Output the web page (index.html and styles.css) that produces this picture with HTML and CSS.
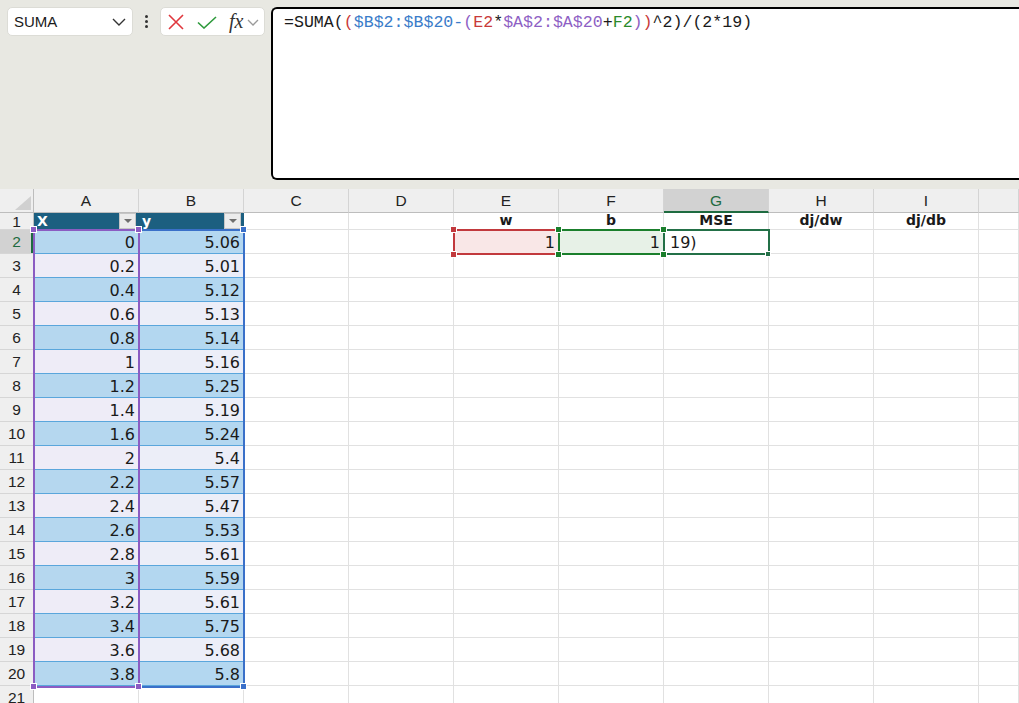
FILE: index.html
```html
<!DOCTYPE html>
<html>
<head>
<meta charset="utf-8">
<link rel="stylesheet" href="styles.css">
</head>
<body>
<div class="app">
  <div class="toolbar">
    <div class="namebox">
      <span class="nb-text">SUMA</span>
      <svg class="chev" width="14" height="8" viewBox="0 0 14 8"><path d="M1 1 L7 7 L13 1" fill="none" stroke="#333" stroke-width="1.4"/></svg>
    </div>
    <div class="dots"><i></i><i></i><i></i></div>
    <div class="fnbox">
      <svg class="ic-x" width="16" height="16" viewBox="0 0 16 16"><path d="M1 1 L15 15 M15 1 L1 15" stroke="#e0383e" stroke-width="1.6" fill="none"/></svg>
      <svg class="ic-ok" width="20" height="13" viewBox="0 0 20 13"><path d="M1 6.5 L7 12 L19 1" stroke="#2e9a3c" stroke-width="1.6" fill="none"/></svg>
      <span class="fx">fx</span>
      <svg class="chev2" width="12" height="7" viewBox="0 0 12 7"><path d="M1 1 L6 6 L11 1" fill="none" stroke="#9a9a9a" stroke-width="1.3"/></svg>
    </div>
    <div class="formula">=SUMA(<span class="fr">(</span><span class="fb">$B$2:$B$20-</span><span class="fp">(</span><span class="fr">E2</span>*<span class="fp">$A$2:$A$20</span>+<span class="fg">F2</span><span class="fp">)</span><span class="fr">)</span>^2)/(2*19)</div>
  </div>

  <div class="sheet">
    <div class="row hdr">
      <div class="rh corner"><span class="tri"></span></div>
      <div class="c ch">A</div><div class="c ch">B</div><div class="c ch">C</div><div class="c ch">D</div><div class="c ch">E</div><div class="c ch">F</div><div class="c ch sel">G</div><div class="c ch">H</div><div class="c ch">I</div><div class="c ch last"></div>
    </div>
    <div class="row r1">
      <div class="rh">1</div>
      <div class="c th"><span>X</span><span class="filt"><i></i></span></div>
      <div class="c th"><span>y</span><span class="filt"><i></i></span></div>
      <div class="c"></div><div class="c"></div>
      <div class="c bh">w</div><div class="c bh">b</div><div class="c bh">MSE</div><div class="c bh">dj/dw</div><div class="c bh">dj/db</div><div class="c last"></div>
    </div>
    <div class="row">
      <div class="rh act">2</div>
      <div class="c ev a">0</div><div class="c ev b">5.06</div><div class="c"></div><div class="c"></div>
      <div class="c num efill">1</div><div class="c num ffill">1</div><div class="c gtxt">19)</div><div class="c"></div><div class="c"></div><div class="c last"></div>
    </div>
    <div class="row"><div class="rh">3</div><div class="c od a">0.2</div><div class="c od b">5.01</div><div class="c"></div><div class="c"></div><div class="c"></div><div class="c"></div><div class="c"></div><div class="c"></div><div class="c"></div><div class="c last"></div></div>
    <div class="row"><div class="rh">4</div><div class="c ev a">0.4</div><div class="c ev b">5.12</div><div class="c"></div><div class="c"></div><div class="c"></div><div class="c"></div><div class="c"></div><div class="c"></div><div class="c"></div><div class="c last"></div></div>
    <div class="row"><div class="rh">5</div><div class="c od a">0.6</div><div class="c od b">5.13</div><div class="c"></div><div class="c"></div><div class="c"></div><div class="c"></div><div class="c"></div><div class="c"></div><div class="c"></div><div class="c last"></div></div>
    <div class="row"><div class="rh">6</div><div class="c ev a">0.8</div><div class="c ev b">5.14</div><div class="c"></div><div class="c"></div><div class="c"></div><div class="c"></div><div class="c"></div><div class="c"></div><div class="c"></div><div class="c last"></div></div>
    <div class="row"><div class="rh">7</div><div class="c od a">1</div><div class="c od b">5.16</div><div class="c"></div><div class="c"></div><div class="c"></div><div class="c"></div><div class="c"></div><div class="c"></div><div class="c"></div><div class="c last"></div></div>
    <div class="row"><div class="rh">8</div><div class="c ev a">1.2</div><div class="c ev b">5.25</div><div class="c"></div><div class="c"></div><div class="c"></div><div class="c"></div><div class="c"></div><div class="c"></div><div class="c"></div><div class="c last"></div></div>
    <div class="row"><div class="rh">9</div><div class="c od a">1.4</div><div class="c od b">5.19</div><div class="c"></div><div class="c"></div><div class="c"></div><div class="c"></div><div class="c"></div><div class="c"></div><div class="c"></div><div class="c last"></div></div>
    <div class="row"><div class="rh">10</div><div class="c ev a">1.6</div><div class="c ev b">5.24</div><div class="c"></div><div class="c"></div><div class="c"></div><div class="c"></div><div class="c"></div><div class="c"></div><div class="c"></div><div class="c last"></div></div>
    <div class="row"><div class="rh">11</div><div class="c od a">2</div><div class="c od b">5.4</div><div class="c"></div><div class="c"></div><div class="c"></div><div class="c"></div><div class="c"></div><div class="c"></div><div class="c"></div><div class="c last"></div></div>
    <div class="row"><div class="rh">12</div><div class="c ev a">2.2</div><div class="c ev b">5.57</div><div class="c"></div><div class="c"></div><div class="c"></div><div class="c"></div><div class="c"></div><div class="c"></div><div class="c"></div><div class="c last"></div></div>
    <div class="row"><div class="rh">13</div><div class="c od a">2.4</div><div class="c od b">5.47</div><div class="c"></div><div class="c"></div><div class="c"></div><div class="c"></div><div class="c"></div><div class="c"></div><div class="c"></div><div class="c last"></div></div>
    <div class="row"><div class="rh">14</div><div class="c ev a">2.6</div><div class="c ev b">5.53</div><div class="c"></div><div class="c"></div><div class="c"></div><div class="c"></div><div class="c"></div><div class="c"></div><div class="c"></div><div class="c last"></div></div>
    <div class="row"><div class="rh">15</div><div class="c od a">2.8</div><div class="c od b">5.61</div><div class="c"></div><div class="c"></div><div class="c"></div><div class="c"></div><div class="c"></div><div class="c"></div><div class="c"></div><div class="c last"></div></div>
    <div class="row"><div class="rh">16</div><div class="c ev a">3</div><div class="c ev b">5.59</div><div class="c"></div><div class="c"></div><div class="c"></div><div class="c"></div><div class="c"></div><div class="c"></div><div class="c"></div><div class="c last"></div></div>
    <div class="row"><div class="rh">17</div><div class="c od a">3.2</div><div class="c od b">5.61</div><div class="c"></div><div class="c"></div><div class="c"></div><div class="c"></div><div class="c"></div><div class="c"></div><div class="c"></div><div class="c last"></div></div>
    <div class="row"><div class="rh">18</div><div class="c ev a">3.4</div><div class="c ev b">5.75</div><div class="c"></div><div class="c"></div><div class="c"></div><div class="c"></div><div class="c"></div><div class="c"></div><div class="c"></div><div class="c last"></div></div>
    <div class="row"><div class="rh">19</div><div class="c od a">3.6</div><div class="c od b">5.68</div><div class="c"></div><div class="c"></div><div class="c"></div><div class="c"></div><div class="c"></div><div class="c"></div><div class="c"></div><div class="c last"></div></div>
    <div class="row"><div class="rh">20</div><div class="c ev a">3.8</div><div class="c ev b">5.8</div><div class="c"></div><div class="c"></div><div class="c"></div><div class="c"></div><div class="c"></div><div class="c"></div><div class="c"></div><div class="c last"></div></div>
    <div class="row"><div class="rh">21</div><div class="c"></div><div class="c"></div><div class="c"></div><div class="c"></div><div class="c"></div><div class="c"></div><div class="c"></div><div class="c"></div><div class="c"></div><div class="c last"></div></div>

    <div class="rng rng-b"></div>
    <div class="rng rng-a"></div>
    <div class="rng rng-e"></div>
    <div class="rng rng-f"></div>
    <div class="rng rng-g"></div>

    <span class="hd hp" style="left:30px;top:37px"></span>
    <span class="hd hp" style="left:135px;top:37px"></span>
    <span class="hd hp" style="left:30px;top:494px"></span>
    <span class="hd hp" style="left:135px;top:494px"></span>
    <span class="hd hbl" style="left:240px;top:37px"></span>
    <span class="hd hbl" style="left:240px;top:494px"></span>
    <span class="hd hr" style="left:450px;top:37px"></span>
    <span class="hd hr" style="left:450px;top:62px"></span>
    <span class="hd hgr" style="left:555px;top:37px"></span>
    <span class="hd hgr" style="left:555px;top:62px"></span>
    <span class="hd hgr" style="left:660px;top:37px"></span>
    <span class="hd hgr" style="left:660px;top:62px"></span>
    <span class="hd hgs" style="left:765px;top:62px"></span>
  </div>
</div>
</body>
</html>
```

FILE: styles.css
```css
html, body {
  margin: 0;
  padding: 0;
  width: 1019px;
  height: 703px;
  overflow: hidden;
  background: #ffffff;
}

.app {
  width: 1019px;
  height: 703px;
  overflow: hidden;
  font-family: "Liberation Sans", Arial, sans-serif;
  color: #1f1f1f;
}

/* ---------- toolbar ---------- */
.toolbar {
  height: 189px;
  box-sizing: border-box;
  background: #e8e8e2;
  display: flex;
  align-items: flex-start;
  padding: 7px 0 0 7px;
}

.namebox {
  width: 126px;
  height: 29px;
  box-sizing: border-box;
  background: #fff;
  border: 1px solid #dcdcd6;
  border-radius: 5px;
  display: flex;
  align-items: center;
  justify-content: space-between;
  padding: 0 6px 0 6px;
  flex: none;
}

.nb-text {
  font-size: 15px;
  color: #1a1a1a;
}

.chev { margin-right: 0; }

.dots {
  width: 27px;
  height: 29px;
  flex: none;
  display: flex;
  flex-direction: column;
  align-items: center;
  justify-content: center;
  gap: 2px;
}

.dots i {
  display: block;
  width: 3px;
  height: 3px;
  border-radius: 50%;
  background: #333;
}

.fnbox {
  width: 105px;
  height: 29px;
  box-sizing: border-box;
  background: #fff;
  border: 1px solid #dcdcd6;
  border-radius: 5px;
  display: flex;
  align-items: center;
  padding-left: 7px;
  flex: none;
}

.ic-x { margin-right: 13px; }
.ic-ok { margin-right: 12px; margin-top: 1px; }

.fx {
  font-family: "Liberation Serif", "Times New Roman", serif;
  font-style: italic;
  font-size: 20px;
  color: #333;
  line-height: 1;
  margin-right: 4px;
  margin-top: -2px;
}

.chev2 { margin-top: 2px; }

.formula {
  margin-left: 6px;
  width: 780px;
  height: 173px;
  box-sizing: border-box;
  background: #fff;
  border: 2px solid #000;
  border-right: none;
  border-radius: 6px 0 0 6px;
  padding: 4px 11px;
  font-family: "Liberation Mono", "Courier New", monospace;
  font-size: 16.6px;
  line-height: 20px;
  color: #1a1a1a;
  white-space: pre;
  flex: none;
}

.fr { color: #c83a3a; }
.fb { color: #3a7cc9; }
.fp { color: #8e5fc4; }
.fg { color: #2b8a2b; }

/* ---------- sheet ---------- */
.sheet {
  position: relative;
  background: #fff;
}

.row {
  display: flex;
  height: 24px;
}

.row.hdr { height: 24px; }
.row.r1 { height: 17px; }

.rh {
  width: 34px;
  flex: none;
  box-sizing: border-box;
  background: #efefef;
  border-right: 1px solid #bdbdbd;
  border-bottom: 1px solid #d6d6d6;
  font-size: 15.5px;
  color: #222;
  display: flex;
  align-items: center;
  justify-content: center;
  padding-top: 1px;
}

.rh.act {
  background: #d2d2d2;
  color: #1e6b40;
  box-shadow: inset -2px 0 0 #1e6b40;
}

.corner {
  position: relative;
  border-bottom: 1px solid #bdbdbd;
}

.tri {
  position: absolute;
  right: 2px;
  bottom: 2px;
  width: 0;
  height: 0;
  border-left: 16px solid transparent;
  border-bottom: 14px solid #d0d0d0;
}

.c {
  width: 105px;
  flex: none;
  box-sizing: border-box;
  border-right: 1px solid #e1e1e1;
  border-bottom: 1px solid #e1e1e1;
  font-family: "DejaVu Sans", Verdana, sans-serif;
  font-size: 16px;
  color: #1a1a1a;
  display: flex;
  align-items: center;
  white-space: nowrap;
}

.c.last {
  flex: 1;
  width: auto;
}

.ch {
  background: #efefef;
  border-right: 1px solid #d4d4d4;
  border-bottom: 1px solid #bdbdbd;
  font-family: "Liberation Sans", Arial, sans-serif;
  font-size: 15.5px;
  color: #222;
  justify-content: center;
  padding-top: 1px;
}

.ch.sel {
  background: #d2d2d2;
  color: #1e6b40;
  border-bottom: 2px solid #1e6b40;
}

/* table header */
.th {
  background: #1c5f80;
  color: #fff;
  font-weight: bold;
  font-size: 14px;
  justify-content: space-between;
  align-items: flex-start;
  padding: 0 2px 0 3px;
  border-right-color: #1c5f80;
  border-bottom: none;
  line-height: 17px;
}

.filt {
  width: 17px;
  height: 16px;
  box-sizing: border-box;
  background: #ececec;
  border: 1px solid #c6c6c6;
  display: flex;
  align-items: center;
  justify-content: center;
}

.filt i {
  width: 0;
  height: 0;
  border-left: 4px solid transparent;
  border-right: 4px solid transparent;
  border-top: 4px solid #6f6f6f;
}

.bh {
  font-weight: bold;
  font-size: 14px;
  justify-content: center;
  align-items: flex-start;
  line-height: 15px;
}

.a, .b, .num {
  justify-content: flex-end;
  padding-right: 3px;
  padding-top: 2px;
}

.ev {
  border-bottom: 1px solid #5aa6dc;
}
.od {
  border-bottom: 1px solid #5aa6dc;
}
.ev.a { background: #b5d7ef; }
.ev.b { background: #b3d7f0; }
.od.a { background: #eeecf7; }
.od.b { background: #eceef8; }

.efill { background: #f9e7e7; }
.ffill { background: #e7f1e7; }

.gtxt {
  padding-left: 6px;
  padding-top: 2px;
}

/* range outlines */
.rng {
  position: absolute;
  box-sizing: border-box;
  border: 2px solid;
  pointer-events: none;
}

.rng-a { left: 33px; top: 40px; width: 107px; height: 459px; border-color: #8b5cc2; }
.rng-b { left: 138px; top: 40px; width: 107px; height: 459px; border-color: #3a70c9; }
.rng-e { left: 453px; top: 40px; width: 107px; height: 26px; border-color: #c2393d; }
.rng-f { left: 558px; top: 40px; width: 107px; height: 26px; border-color: #1a7f2c; }
.rng-g { left: 663px; top: 40px; width: 107px; height: 26px; border-color: #237047; }

.hd {
  position: absolute;
  width: 7px;
  height: 7px;
  box-sizing: border-box;
  border: 1px solid #fff;
}

.hp { background: #8b5cc2; }
.hbl { background: #3a70c9; }
.hr { background: #c2393d; }
.hgr { background: #1a7f2c; }
.hgs { background: #237047; width: 6px; height: 6px; }
```
